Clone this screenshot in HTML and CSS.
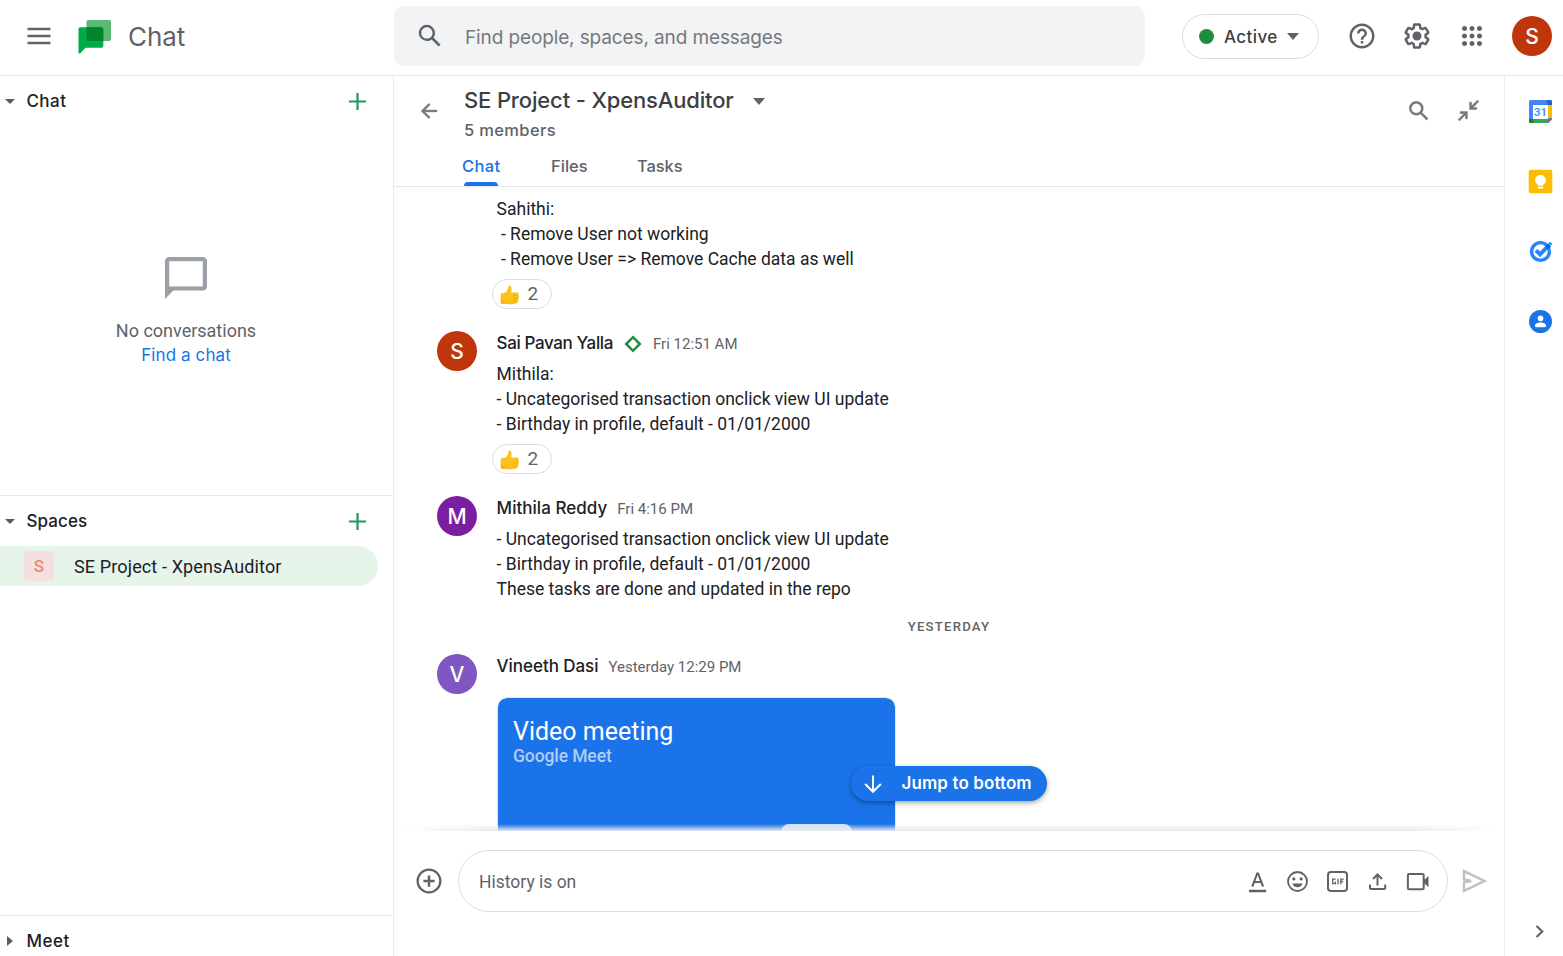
FILE: index.html
```html
<!DOCTYPE html>
<html lang="en">
<head>
<meta charset="utf-8">
<title>Chat</title>
<link rel="stylesheet" href="styles.css">
</head>
<body>
<svg width="0" height="0" class="defs">
  <symbol id="thumb" viewBox="0 0 20 20">
    <path d="M1 8.600 5.600 7.600C7.600 6 8.400 3.600 8.300 1.500 8.400.4 10.900.3 11.400 2.300 11.800 4.200 11.400 6 11 7.500L17 7.600C19 7.700 19.300 9.800 18 10.400 19.600 10.900 19.400 13 18 13.300 19.200 13.900 18.700 15.700 17.500 15.900 18.200 17 17.300 18.300 16 18.400 12 19.500 8.500 19.600 6 18.600L1 19C.4 15.500 .4 11.500 1 8.600Z" fill="#fcc21b"/>
    <path d="M13 10.500H18M13 13.400H18M12.800 16H17.400" stroke="#f2a600" stroke-width=".8" fill="none"/>
    <path d="M1 14C4 17 8 17.500 12 19.100 9.500 19.400 7.500 19.100 6 18.600L1 19Z" fill="#f7b116"/>
  </symbol>
</svg>
<header class="topbar">
  <svg class="menu" width="24" height="18" viewBox="0 0 24 18"><path d="M.5 2h23M.5 9h23M.5 16h23" stroke="#5f6368" stroke-width="2.300"/></svg>
  <svg class="logo" width="34" height="34" viewBox="0 0 34 34">
    <rect x="8.500" y="0" width="24.500" height="21" rx="1.800" fill="#5bb974"/>
    <path d="M2.300 7.200H23.500a1.800 1.800 0 0 1 1.800 1.800V26a1.800 1.800 0 0 1-1.800 1.800H7.500L2.300 33.200C1.600 33.900.5 33.500.5 32.400V9a1.800 1.800 0 0 1 1.800-1.800Z" fill="#00ac47"/>
    <path d="M8.500 7.200H23.500a1.800 1.800 0 0 1 1.800 1.800V21H10.300a1.800 1.800 0 0 1-1.800-1.800Z" fill="#00832d"/>
  </svg>
  <span class="brand">Chat</span>
  <div class="search">
    <svg width="30" height="30" viewBox="0 0 24 24" fill="#5f6368"><path d="M20.490 19l-5.730-5.730C15.530 12.200 16 10.910 16 9.500A6.500 6.500 0 1 0 9.500 16c1.410 0 2.700-.47 3.770-1.240L19 20.490 20.490 19zM5 9.500C5 7.010 7.010 5 9.500 5S14 7.010 14 9.500 11.990 14 9.500 14 5 11.990 5 9.500z"/></svg>
    <span class="search-text">Find people, spaces, and messages</span>
  </div>
  <div class="status"><i class="dot"></i><span class="status-text">Active</span><i class="caret"></i></div>
  <div class="tools">
    <svg width="30" height="30" viewBox="0 0 24 24" fill="#5f6368"><path d="M11 18h2v-2h-2v2zm1-16C6.480 2 2 6.480 2 12s4.480 10 10 10 10-4.480 10-10S17.520 2 12 2zm0 18c-4.410 0-8-3.590-8-8s3.590-8 8-8 8 3.590 8 8-3.590 8-8 8zm0-14c-2.210 0-4 1.790-4 4h2c0-1.100.9-2 2-2s2 .9 2 2c0 2-3 1.750-3 5h2c0-2.250 3-2.500 3-5 0-2.210-1.790-4-4-4z"/></svg>
    <svg width="30" height="30" viewBox="0 0 24 24" fill="#5f6368"><path d="M13.850 22.250h-3.700c-.74 0-1.360-.54-1.450-1.270l-.27-1.890c-.27-.14-.53-.29-.79-.46l-1.800.72c-.7.26-1.470-.03-1.810-.65L2.200 15.530c-.35-.66-.2-1.440.36-1.880l1.530-1.190c-.01-.15-.02-.3-.02-.46 0-.15.01-.31.020-.46l-1.520-1.190c-.59-.45-.74-1.260-.37-1.880l1.850-3.190c.34-.62 1.110-.9 1.790-.63l1.810.73c.26-.17.520-.32.780-.46l.27-1.910c.09-.7.710-1.250 1.440-1.250h3.700c.74 0 1.360.54 1.450 1.270l.27 1.890c.27.140.53.290.79.460l1.800-.72c.71-.26 1.480.03 1.820.65l1.840 3.180c.36.660.2 1.440-.36 1.880l-1.520 1.190c.01.15.02.3.02.46s-.01.310-.02.460l1.520 1.190c.56.450.72 1.230.37 1.860l-1.860 3.220c-.34.620-1.110.9-1.800.63l-1.800-.72c-.26.170-.52.320-.78.460l-.27 1.910c-.1.680-.72 1.220-1.460 1.220zm-3.230-2h2.760l.37-2.550.53-.22c.44-.18.88-.44 1.340-.78l.45-.34 2.380.96 1.380-2.400-2.030-1.580.07-.56c.03-.26.060-.51.060-.78s-.03-.53-.06-.78l-.07-.56 2.030-1.580-1.390-2.400-2.390.96-.45-.35c-.42-.32-.87-.58-1.330-.77l-.52-.22-.37-2.550h-2.760l-.37 2.550-.53.210c-.44.190-.88.440-1.340.79l-.45.330-2.380-.95-1.390 2.390 2.030 1.580-.07.56a7 7 0 0 0-.06.790c0 .26.020.53.060.78l.07.560-2.030 1.580 1.380 2.400 2.390-.96.450.35c.43.330.86.580 1.330.77l.53.220.38 2.550z"/><circle cx="12" cy="12" r="3.600"/></svg>
    <svg width="30" height="30" viewBox="0 0 24 24" fill="#5f6368"><path d="M6 8c1.100 0 2-.9 2-2s-.9-2-2-2-2 .9-2 2 .9 2 2 2zm6 12c1.100 0 2-.9 2-2s-.9-2-2-2-2 .9-2 2 .9 2 2 2zm-6 0c1.100 0 2-.9 2-2s-.9-2-2-2-2 .9-2 2 .9 2 2 2zm0-6c1.100 0 2-.9 2-2s-.9-2-2-2-2 .9-2 2 .9 2 2 2zm6 0c1.100 0 2-.9 2-2s-.9-2-2-2-2 .9-2 2 .9 2 2 2zm4-8c0 1.100.9 2 2 2s2-.9 2-2-.9-2-2-2-2 .9-2 2zm-4 2c1.100 0 2-.9 2-2s-.9-2-2-2-2 .9-2 2 .9 2 2 2zm6 6c1.100 0 2-.9 2-2s-.9-2-2-2-2 .9-2 2 .9 2 2 2zm0 6c1.100 0 2-.9 2-2s-.9-2-2-2-2 .9-2 2 .9 2 2 2z"/></svg>
  </div>
  <span class="avatar red me">S</span>
</header>

<div class="body">
  <nav class="side">
    <section class="panel">
      <div class="panel-head"><i class="caret small"></i><span class="label chat-label">Chat</span><svg class="plus" width="18" height="18" viewBox="0 0 18 18"><path d="M8.500 0v17M0 8.500h17" stroke="#1e9b58" stroke-width="2.200"/></svg></div>
      <div class="empty">
        <svg width="42" height="42" viewBox="2 2 20 20" fill="#9aa0a6"><path d="M20 2H4c-1.100 0-2 .9-2 2v18l4-4h14c1.100 0 2-.9 2-2V4c0-1.100-.9-2-2-2zm0 14H4V4h16v12z"/></svg>
        <span class="empty-text">No conversations</span>
        <a class="find">Find a chat</a>
      </div>
    </section>
    <section class="panel">
      <div class="panel-head"><i class="caret small"></i><span class="label spaces-label">Spaces</span><svg class="plus" width="18" height="18" viewBox="0 0 18 18"><path d="M8.500 0v17M0 8.500h17" stroke="#1e9b58" stroke-width="2.200"/></svg></div>
      <div class="room"><span class="room-icon">S</span><span class="room-name">SE Project - XpensAuditor</span></div>
    </section>
    <section class="panel-last">
      <div class="panel-head"><i class="caret right"></i><span class="label meet-label">Meet</span></div>
    </section>
  </nav>

  <main class="main">
    <div class="room-head">
      <svg class="back" width="24" height="24" viewBox="0 0 24 24" fill="#777b7f"><path d="M20 10.900H8.100l5.200-5.200L11.800 4.200 4 12l7.800 7.800 1.500-1.500-5.200-5.200H20z" stroke="#777b7f" stroke-width=".3"/></svg>
      <div class="room-info">
        <div class="title-row"><h1 class="title">SE Project - XpensAuditor</h1><i class="caret"></i></div>
        <div class="members">5 members</div>
        <div class="tabs"><span class="tab active">Chat</span><span class="tab files">Files</span><span class="tab tasks">Tasks</span></div>
      </div>
      <div class="room-tools">
        <svg width="26" height="26" viewBox="0 0 24 24" fill="#74787c"><path d="M20.490 19l-5.730-5.730C15.530 12.200 16 10.910 16 9.500A6.500 6.500 0 1 0 9.500 16c1.410 0 2.700-.47 3.770-1.240L19 20.490 20.490 19zM5 9.500C5 7.010 7.010 5 9.500 5S14 7.010 14 9.500 11.990 14 9.500 14 5 11.990 5 9.500z" stroke="#74787c" stroke-width=".3"/></svg>
        <svg width="25" height="25" viewBox="0 0 24 24" fill="#74787c"><path d="M22 3.400 20.600 2 15 7.600V4h-2v7h7V9h-3.600zM4 13v2h3.600L2 20.600 3.400 22 9 16.400V20h2v-7z" stroke="#74787c" stroke-width=".4"/></svg>
      </div>
    </div>

    <div class="stream">
      <article class="msg first"><div class="content"><p class="text">Sahithi:
&nbsp;- Remove User not working
&nbsp;- Remove User =&gt; Remove Cache data as well</p><div class="reaction"><svg width="20" height="20"><use href="#thumb"/></svg><span>2</span></div></div></article>

      <article class="msg"><span class="avatar red">S</span><div class="content">
        <div class="by"><b class="name n1">Sai Pavan Yalla</b><svg class="diamond" width="18" height="18" viewBox="0 0 18 18"><path d="M9 2.200 15.800 9 9 15.800 2.200 9Z" fill="none" stroke="#1e8e3e" stroke-width="2.500"/></svg><time>Fri 12:51 AM</time></div>
        <p class="text">Mithila:
- Uncategorised transaction onclick view UI update
- Birthday in profile, default - 01/01/2000</p>
        <div class="reaction"><svg width="20" height="20"><use href="#thumb"/></svg><span>2</span></div></div></article>

      <article class="msg"><span class="avatar purple">M</span><div class="content">
        <div class="by"><b class="name n2">Mithila Reddy</b><time>Fri 4:16 PM</time></div>
        <p class="text">- Uncategorised transaction onclick view UI update
- Birthday in profile, default - 01/01/2000
These tasks are done and updated in the repo</p></div></article>

      <div class="day">YESTERDAY</div>

      <article class="msg"><span class="avatar violet">V</span><div class="content">
        <div class="by"><b class="name n3">Vineeth Dasi</b><time>Yesterday 12:29 PM</time></div>
        <div class="card"><div class="card-title">Video meeting</div><div class="card-sub">Google Meet</div><div class="card-button"></div></div></div></article>

      <div class="fade"></div>
      <div class="jump"><svg width="18" height="18" viewBox="0 0 18 18"><path d="M9 .5V16.500M1.200 9 9 16.800 16.800 9" fill="none" stroke="#fff" stroke-width="2"/></svg><span class="jump-text">Jump to bottom</span></div>
    </div>

    <div class="composer">
      <svg class="add" width="30" height="30" viewBox="0 0 24 24" fill="#5f6368"><path d="M13 7.500h-2V11H7.500v2H11v3.500h2V13h3.500v-2H13zM12 2a10 10 0 1 0 0 20 10 10 0 0 0 0-20zm0 18.200a8.200 8.200 0 1 1 0-16.400 8.200 8.200 0 0 1 0 16.400z"/></svg>
      <div class="input"><span class="hint">History is on</span>
        <div class="input-tools">
          <svg width="25" height="25" viewBox="0 0 25 25" fill="#5f6368"><path d="M4 20.700h17.200v2.500H4zM11.500 3.600h2.300L19.200 17.500h-2.400l-1.200-3.400H9.800l-1.200 3.400H6.200zM12.600 6.100 10.500 12.100h4.400z"/></svg>
          <svg width="25" height="25" viewBox="0 0 24 24" fill="#5f6368"><path d="M12 2a10 10 0 1 0 0 20 10 10 0 0 0 0-20zm0 18.200a8.200 8.200 0 1 1 0-16.400 8.200 8.200 0 0 1 0 16.400z"/><circle cx="8.500" cy="9.500" r="1.500"/><circle cx="15.500" cy="9.500" r="1.500"/><path d="M7 13.800h10c-.7 2.100-2.600 3.600-5 3.600s-4.300-1.500-5-3.600z"/></svg>
          <svg width="25" height="25" viewBox="0 0 25 25" fill="none" stroke="#5f6368"><rect x="3" y="3" width="19" height="19" rx="3" stroke-width="2"/><path d="M10.700 10.200H7.700v4.500h2.700v-2.200M13 9.700v5.500M15.800 15.200v-5h3M15.800 12.500h2.400" stroke-width="1.300"/></svg>
          <svg width="25" height="25" viewBox="0 0 25 25" fill="none" stroke="#5f6368" stroke-width="2"><path d="M12.500 16.500V6M8 10l4.500-4.500L17 10M5 15.500V19a1 1 0 0 0 1 1h13.200a1 1 0 0 0 1-1v-3.500"/></svg>
          <svg width="25" height="25" viewBox="0 0 25 25"><rect x="2.900" y="5" width="15.800" height="15.200" rx="1" fill="none" stroke="#5f6368" stroke-width="2"/><path d="M18.500 11.500 23.500 7v11.200l-5-4.500z" fill="#5f6368"/></svg>
        </div>
      </div>
      <svg class="send" width="26" height="24" viewBox="0 0 26 24"><path d="M2 2.200 22.500 12 2 21.800V13.500L9 12 2 10.500Z" fill="none" stroke="#bdc1c6" stroke-width="2.400"/></svg>
    </div>
  </main>

  <aside class="rail">
    <svg width="25" height="25" viewBox="0 0 25 25"><rect x="1" y="1" width="23" height="23" rx="1.500" fill="#4285f4"/><path d="M19 1h3.500A1.500 1.500 0 0 1 24 2.500V6h-5z" fill="#1967d2"/><path d="M20 6h4v13h-4z" fill="#fbbc04"/><path d="M6 20h13v4H6z" fill="#34a853"/><path d="M1 20h4.500v4H2.500A1.500 1.500 0 0 1 1 22.500z" fill="#188038"/><path d="M5 6h15v14H5z" fill="#fff"/><path d="M19.500 24v-4H24z" fill="#ea4335"/><path d="M20 24.500 24.500 20V24.500z" fill="#fff"/><text x="12.500" y="17" text-anchor="middle" class="cal">31</text></svg>
    <svg width="25" height="25" viewBox="0 0 25 25"><rect x=".7" y=".7" width="23.600" height="23.600" rx="2" fill="#fbbc04"/><path d="M12.500 6a5.200 5.200 0 0 0-2.700 9.700v1h5.400v-1A5.200 5.200 0 0 0 12.500 6zM9.800 17.700h5.400v1.700H9.800z" fill="#fff"/></svg>
    <svg width="25" height="25" viewBox="0 0 25 25"><circle cx="12.500" cy="12.500" r="8.900" fill="none" stroke="#2684fc" stroke-width="3.400"/><path d="M8 11.300 12 15.300 20.500 6.800" fill="none" stroke="#2684fc" stroke-width="4"/><path d="M17 7.500 20 4.500 23 7.500 20 10.500Z" fill="#0066da"/><path d="M20.300 4.500 22 2.800 24.300 5 22.500 6.800Z" fill="#2684fc"/></svg>
    <svg width="25" height="25" viewBox="0 0 25 25"><circle cx="12.500" cy="12.500" r="11.500" fill="#1a73e8"/><circle cx="12.500" cy="9.400" r="2.800" fill="#fff"/><path d="M7 17.700v-1.200c0-4 11-4 11 0v1.200c-.4.700-10.600.7-11 0z" fill="#fff"/></svg>
    <svg class="expand" width="25" height="25" viewBox="0 0 25 25"><path d="M8.500 7 14.300 12.500 8.500 18" fill="none" stroke="#5f6368" stroke-width="2.100"/></svg>
  </aside>
</div>
</body>
</html>
```
FILE: styles.css
```css
* { box-sizing: border-box; }
body { margin: 0; width: 1563px; height: 956px; overflow: hidden; background: #fff; color: #202124; font-family: Roboto, sans-serif; font-size: 17.5px; display: flex; flex-direction: column; }
svg { display: block; flex: none; }
span, time, b, h1 { white-space: nowrap; }
.defs { position: absolute; }

.topbar { height: 76px; flex: none; border-bottom: 1px solid #e8eaed; display: flex; align-items: flex-start; }
.menu { margin: 27px 0 0 27px; }
.logo { margin: 20px 0 0 27px; }
.brand { margin: 19px 0 0 16px; width: 266px; font: 400 26px/36px Inter, sans-serif; color: #5f6368; letter-spacing: -.1px; }
.search { width: 751px; height: 60px; margin-top: 6px; background: #f1f3f4; border-radius: 10px; display: flex; align-items: center; padding-left: 21px; gap: 20px; flex: none; }
.search-text { font: 400 19px/30px Inter, sans-serif; color: #76797d; padding-top: 3px; letter-spacing: -.12px; }
.status { width: 137px; height: 45px; margin: 14px 0 0 37px; border: 1px solid #dadce0; border-radius: 23px; display: flex; align-items: center; padding-left: 16px; flex: none; }
.dot { width: 15px; height: 15px; border-radius: 50%; background: #1e8e3e; }
.status-text { width: 54px; margin: 0 9px 0 10px; font: 500 17px/24px Inter, sans-serif; color: #3c4043; letter-spacing: .4px; }
.caret { width: 0; height: 0; border: 6.500px solid transparent; border-top: 7px solid #5f6368; border-bottom: 0; flex: none; }
.caret.small { border-width: 5px 5px 0; border-top-color: #5a5d5e; }
.caret.right { border: 5px solid transparent; border-left: 6px solid #5a5d5e; border-right: 0; margin-left: 2px; margin-right: 2px; }
.tools { display: flex; gap: 25px; margin: 21px 0 0 28px; }
.avatar { width: 40px; height: 40px; border-radius: 50%; color: #fff; font: 500 21px/41px Inter, sans-serif; text-align: center; flex: none; }
.red { background: #bf360c; }
.purple { background: #7b1fa2; }
.violet { background: #7e57c2; }
.me { margin: 16px 0 0 25px; }

.body { flex: 1; display: flex; min-height: 0; }
.side { width: 394px; flex: none; border-right: 1px solid #e8eaed; }
.panel { height: 420px; border-bottom: 1px solid #e4e9e7; }
.panel-head { height: 50px; display: flex; align-items: center; padding-left: 5.400px; padding-right: 26px; }
.label { margin-left: 11px; font: 500 17px/24px Inter, sans-serif; }
.chat-label, .meet-label { letter-spacing: .5px; }
.spaces-label { letter-spacing: .1px; }
.plus { margin-left: auto; margin-top: 2px; }
.empty { display: flex; flex-direction: column; align-items: center; width: 372px; padding-top: 131px; }
.empty-text { margin-top: 19px; font-size: 18px; line-height: 25px; color: #5f6368; }
.find { font: 400 17px/24px Inter, sans-serif; letter-spacing: .1px; color: #1a73e8; }
.room { width: 378px; height: 40px; border-radius: 0 20px 20px 0; background: #e6f4ea; display: flex; align-items: center; padding-left: 24px; gap: 20px; }
.room-icon { width: 30px; height: 30px; border-radius: 4px; background: #f5e0df; color: #f0886c; text-align: center; font: 500 17px/31px Roboto, sans-serif; }
.room-name { font-size: 18px; letter-spacing: .13px; }

.main { width: 1110px; flex: none; display: flex; flex-direction: column; }
.room-head { height: 111px; flex: none; border-bottom: 1px solid #e4e6e8; display: flex; }
.back { margin: 23px 0 0 23px; }
.room-info { margin-left: 23px; }
.title-row { display: flex; align-items: center; gap: 19px; height: 50px; }
.title { margin: -2px 0 0; width: 270px; font: 500 22px/30px Inter, sans-serif; letter-spacing: -.15px; color: #3c4043; }
.members { margin-top: -8px; font: 500 16.500px/24px Inter, sans-serif; letter-spacing: .35px; color: #5f6368; }
.tabs { display: flex; margin-left: -2px; margin-top: 12px; }
.tab { font: 500 16.500px/24px Inter, sans-serif; color: #5f6368; width: 86px; height: 32px; }
.tab.active { width: 89px; color: #1a73e8; letter-spacing: .4px; }
.tab.tasks { letter-spacing: -.1px; }
.tab.active::after { content: ""; display: block; width: 34px; height: 4px; margin: 4px 0 0 2px; background: #1a73e8; border-radius: 4px 4px 0 0; }
.room-tools { margin: 22px 23px 0 auto; display: flex; gap: 24px; }

.stream { position: relative; flex: none; height: 644px; overflow: hidden; padding: 9px 0 0 43px; }
.msg { display: flex; gap: 19.600px; }
.msg.first { padding-left: 59.600px; }
.by { height: 30px; display: flex; align-items: flex-start; }
.name { font: 500 17px/24px Inter, sans-serif; }
.n1 { letter-spacing: -.38px; }
.n2 { letter-spacing: .03px; }
.n3 { letter-spacing: -.05px; }
time { margin-left: 10px; font-size: 15px; line-height: 26px; color: #5f6368; }
.diamond { margin: 4px 1px 0 11px; }
.text { margin: 0; padding-top: 1px; line-height: 25px; white-space: pre; }
.reaction { width: 60px; height: 30px; margin: 7px 0 22px -4.600px; border: 1px solid #dadce0; border-radius: 15px; display: flex; align-items: center; padding-left: 7px; gap: 7.500px; font-size: 19px; line-height: 26px; padding-bottom: 1px; color: #5f6368; }
.reaction svg { margin-top: 2px; }
.day { height: 52px; margin-left: -43px; text-align: center; font-size: 13.200px; font-weight: 500; line-height: 49px; letter-spacing: 1.200px; color: #5f6368; }
.card { width: 399px; height: 160px; margin: 13px 0 0 .4px; border: 1px solid #e4e6ea; border-radius: 10px; background: #1a73e8; background-clip: padding-box; color: #fff; padding: 17px 15px; }
.card-title { font-size: 25px; line-height: 33px; }
.card-sub { font-size: 17.500px; line-height: 20px; margin-top: -2px; font-weight: 500; color: #b0cdf7; letter-spacing: -.1px; }
.card-button { width: 71px; height: 30px; margin: 58px 0 0 268px; border-radius: 8px; background: #d2e3fc; }
.fade { position: absolute; left: 0; right: 0; bottom: 0; height: 7px; background: linear-gradient(to bottom, rgba(232,234,237,0), #e8eaed); -webkit-mask-image: linear-gradient(to right, transparent 5px, #000 90px, #000 1020px, transparent 1105px); mask-image: linear-gradient(to right, transparent 5px, #000 90px, #000 1020px, transparent 1105px); }
.jump { position: absolute; left: 457px; top: 579px; width: 196px; height: 35px; border-radius: 18px; background: #1a73e8; color: #fff; display: flex; align-items: center; padding-left: 13px; gap: 19.500px; box-shadow: 0 2px 5px rgba(0,0,0,.35); }
.jump-text { font: 600 17px/24px Inter, sans-serif; letter-spacing: .1px; margin-top: -2px; }

.composer { flex: 1; display: flex; align-items: flex-start; }
.add { margin: 35px 0 0 20px; }
.input { width: 990px; height: 62px; margin: 19px 0 0 14px; border: 1px solid #dadce0; border-radius: 31px; display: flex; align-items: center; justify-content: space-between; padding: 0 17.500px 0 20px; flex: none; }
.hint { color: #5f6368; padding-top: 2px; }
.input-tools { display: flex; gap: 15px; }
.send { margin: 38px 0 0 14px; }

.rail { width: 59px; flex: none; border-left: 1px solid #eceef0; display: flex; flex-direction: column; align-items: center; padding: 23px 0 12px 12px; gap: 45px; }
.cal { font: 500 11.500px Roboto, sans-serif; fill: #4285f4; }
.expand { margin-top: auto; }
```
